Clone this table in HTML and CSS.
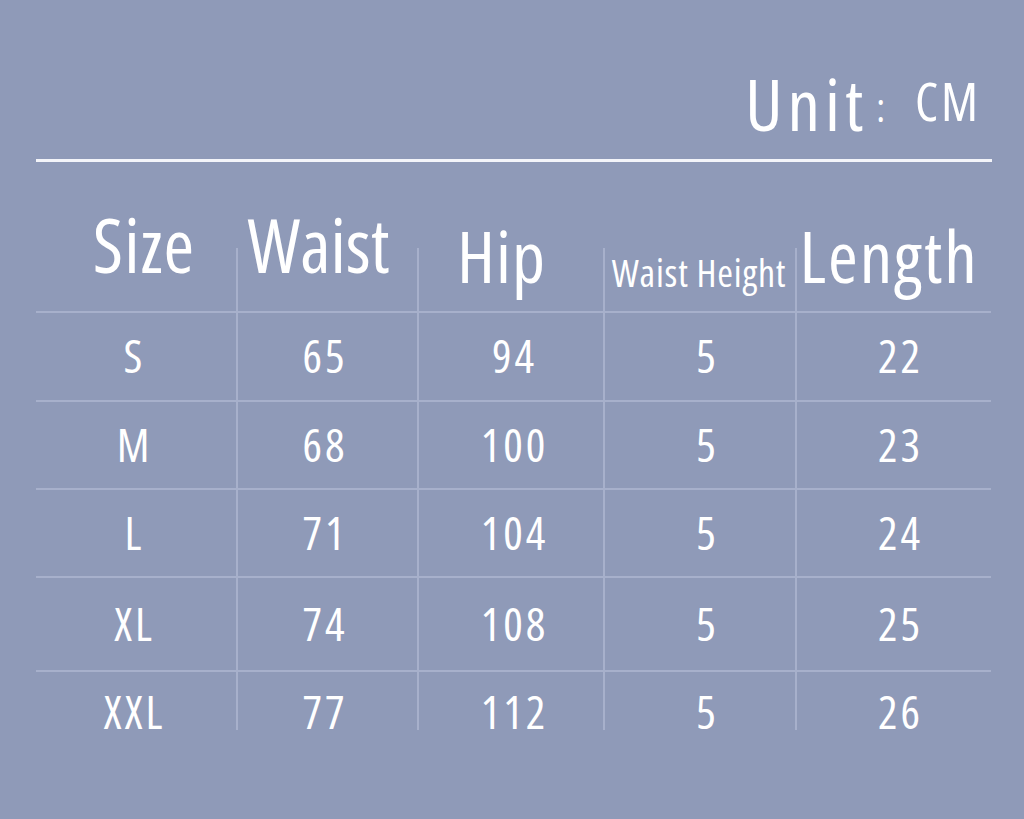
FILE: index.html
```html
<!DOCTYPE html>
<html lang="en">
<head>
<meta charset="utf-8">
<title>Size Chart</title>
<link rel="stylesheet" href="styles.css">
</head>
<body>
<div class="page">
  <div class="unit-bar">
    <span class="unit-label">Unit</span><span class="unit-colon">:</span><span class="unit-value">CM</span>
  </div>
  <div class="rule"></div>
  <div class="chart">
    <div class="hcell h-lg h-size">Size</div>
    <div class="hcell h-lg h-waist line">Waist</div>
    <div class="hcell h-md h-hip line">Hip</div>
    <div class="hcell h-sm line">Waist Height</div>
    <div class="hcell h-md h-length line">Length</div>

    <div class="cell top c1">S</div><div class="cell top line c2">65</div><div class="cell top line c3">94</div><div class="cell top line c4">5</div><div class="cell top line c5">22</div>
    <div class="cell top c1">M</div><div class="cell top line c2">68</div><div class="cell top line c3">100</div><div class="cell top line c4">5</div><div class="cell top line c5">23</div>
    <div class="cell top c1">L</div><div class="cell top line c2">71</div><div class="cell top line c3">104</div><div class="cell top line c4">5</div><div class="cell top line c5">24</div>
    <div class="cell top c1">XL</div><div class="cell top line c2">74</div><div class="cell top line c3">108</div><div class="cell top line c4">5</div><div class="cell top line c5">25</div>
    <div class="cell top last c1">XXL</div><div class="cell top last line c2">77</div><div class="cell top last line c3">112</div><div class="cell top last line c4">5</div><div class="cell top last line c5">26</div>
  </div>
</div>
</body>
</html>
```
FILE: styles.css
```css
html, body {
  margin: 0;
  padding: 0;
}
body {
  background: #8f9ab8;
  width: 1024px;
  height: 819px;
  overflow: hidden;
  font-family: "Open Sans", "Noto Sans", sans-serif;
  font-stretch: 75%;
  color: #ffffff;
}
.page {
  display: flex;
  flex-direction: column;
}
.unit-bar {
  height: 159px;
  display: flex;
  justify-content: flex-end;
  align-items: flex-end;
  padding-right: 43px;
  box-sizing: border-box;
}
.unit-label {
  font-size: 72px;
  line-height: 1;
  margin-bottom: 20px;
  letter-spacing: 5px;
}
.unit-colon {
  font-size: 40px;
  line-height: 1;
  margin: 0 30px 32px 8px;
}
.unit-value {
  font-size: 52px;
  line-height: 1;
  margin-bottom: 32px;
  letter-spacing: 3px;
}
.rule {
  margin-left: 36px;
  width: 956px;
  height: 3px;
  background: #f3f4f9;
}
.chart {
  margin-left: 36px;
  width: 955px;
  display: grid;
  grid-template-columns: 200px 181px 186px 192px 196px;
  grid-template-rows: 149px 89px 88px 88px 94px 60px;
}
.hcell {
  display: flex;
  align-items: flex-end;
  justify-content: center;
  line-height: 1;
  white-space: nowrap;
}
.hcell.line {
  background: linear-gradient(to right, #a7b0cb 0, #a7b0cb 2px, transparent 2px) no-repeat left bottom / 2px 63px;
}
.h-lg {
  font-size: 74px;
  padding-bottom: 29px;
}
.h-md {
  font-size: 72px;
  padding-bottom: 20px;
}
.h-size {
  letter-spacing: 1px;
  padding-left: 16px;
}
.h-waist {
  padding-right: 16px;
}
.h-hip {
  letter-spacing: 1px;
  padding-right: 17px;
}
.h-length {
  letter-spacing: 2px;
  padding-right: 8px;
}
.h-sm {
  font-size: 38px;
  padding-bottom: 20px;
  letter-spacing: 0.8px;
}
.cell {
  display: flex;
  align-items: center;
  justify-content: center;
  font-size: 46px;
  line-height: 1;
  letter-spacing: 3px;
  padding-bottom: 3px;
}
.cell.top {
  border-top: 2px solid #a7b0cb;
}
.cell.line {
  border-left: 2px solid #a7b0cb;
}
.cell.last {
  align-items: flex-start;
  padding-top: 16px;
  padding-bottom: 0;
}
.c1 {
  padding-right: 3px;
}
.c2 {
  padding-right: 5px;
}
.c3 {
  padding-left: 7px;
}
.c4 {
  padding-left: 15px;
}
.c5 {
  padding-left: 13px;
}
```
